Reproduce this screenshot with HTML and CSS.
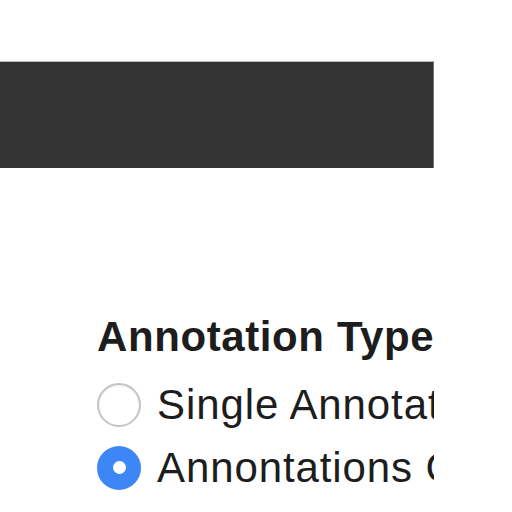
FILE: index.html
```html
<!DOCTYPE html>
<html>
<head>
<meta charset="utf-8">
<link rel="stylesheet" href="styles.css">
</head>
<body>
<div class="frame">
  <div class="toolbar"></div>
  <form class="panel">
    <div class="title">Annotation Type</div>
    <label class="option"><input type="radio" name="type" class="radio"><span>Single Annotation</span></label>
    <label class="option"><input type="radio" name="type" class="radio" checked><span>Annontations Group</span></label>
  </form>
</div>
</body>
</html>
```
FILE: styles.css
```css
html, body {
  margin: 0;
  padding: 0;
  background: #ffffff;
}
.frame {
  width: 434px;
  height: 512px;
  overflow: hidden;
  padding-top: 61px;
  box-sizing: border-box;
  font-family: "Liberation Sans", Arial, Helvetica, sans-serif;
  color: #1d1d1d;
}
.toolbar {
  height: 107px;
  background: #333333;
  border-top: 1px solid #b8b8b8;
  border-right: 1px solid #777;
  box-sizing: border-box;
}
.panel {
  margin: 0;
  padding: 145px 0 0 97px;
  display: flex;
  flex-direction: column;
  white-space: nowrap;
}
.title {
  font-weight: bold;
  font-size: 42px;
  line-height: 48px;
  letter-spacing: 0.6px;
  margin-bottom: 12px;
}
.option {
  display: flex;
  align-items: center;
  height: 63px;
  gap: 16px;
  font-size: 42px;
  line-height: 48px;
  letter-spacing: 0.9px;
}
.radio {
  appearance: none;
  -webkit-appearance: none;
  margin: 0;
  width: 44px;
  height: 44px;
  flex: none;
  border-radius: 50%;
  border: 2px solid #c4c4c4;
  box-shadow: inset 0 1px 2px rgba(0,0,0,0.08);
  background: #fff;
  box-sizing: border-box;
  display: grid;
  place-items: center;
}
.radio:checked {
  border: none;
  box-shadow: none;
  background: #3c86f6;
}
.radio:checked::after {
  content: "";
  width: 13px;
  height: 13px;
  border-radius: 50%;
  background: #fff;
}
```
